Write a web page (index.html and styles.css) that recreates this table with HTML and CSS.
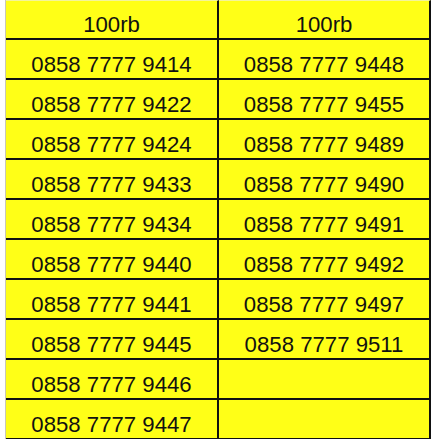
FILE: index.html
```html
<!DOCTYPE html>
<html lang="id">
<head>
<meta charset="utf-8">
<title>100rb</title>
<link rel="stylesheet" href="styles.css">
</head>
<body>
<div class="sheet">
  <div class="cell head">100rb</div>
  <div class="cell head">100rb</div>
  <div class="cell">0858 7777 9414</div>
  <div class="cell">0858 7777 9448</div>
  <div class="cell">0858 7777 9422</div>
  <div class="cell">0858 7777 9455</div>
  <div class="cell">0858 7777 9424</div>
  <div class="cell">0858 7777 9489</div>
  <div class="cell">0858 7777 9433</div>
  <div class="cell">0858 7777 9490</div>
  <div class="cell">0858 7777 9434</div>
  <div class="cell">0858 7777 9491</div>
  <div class="cell">0858 7777 9440</div>
  <div class="cell">0858 7777 9492</div>
  <div class="cell">0858 7777 9441</div>
  <div class="cell">0858 7777 9497</div>
  <div class="cell">0858 7777 9445</div>
  <div class="cell">0858 7777 9511</div>
  <div class="cell">0858 7777 9446</div>
  <div class="cell"></div>
  <div class="cell">0858 7777 9447</div>
  <div class="cell"></div>
</div>
</body>
</html>
```
FILE: styles.css
```css
html, body {
  margin: 0;
  padding: 0;
  background: #ffffff;
  overflow: hidden;
}

.sheet {
  margin-left: 5px;
  width: 426px;
  box-sizing: border-box;
  border-left: 1px solid #c8c8b4;
  display: grid;
  grid-template-columns: 213px 212px;
  font-family: "Liberation Sans", Arial, sans-serif;
  font-size: 22.2px;
  color: #111111;
}

.cell {
  box-sizing: border-box;
  height: 40px;
  padding-top: 15px;
  line-height: 20px;
  text-align: center;
  white-space: pre;
  background: #ffff17;
  border-bottom: 2px solid #111111;
  border-right: 2px solid #111111;
}

.head {
  padding-top: 14px;
  border-top: 1px solid #f4f49a;
}
```
